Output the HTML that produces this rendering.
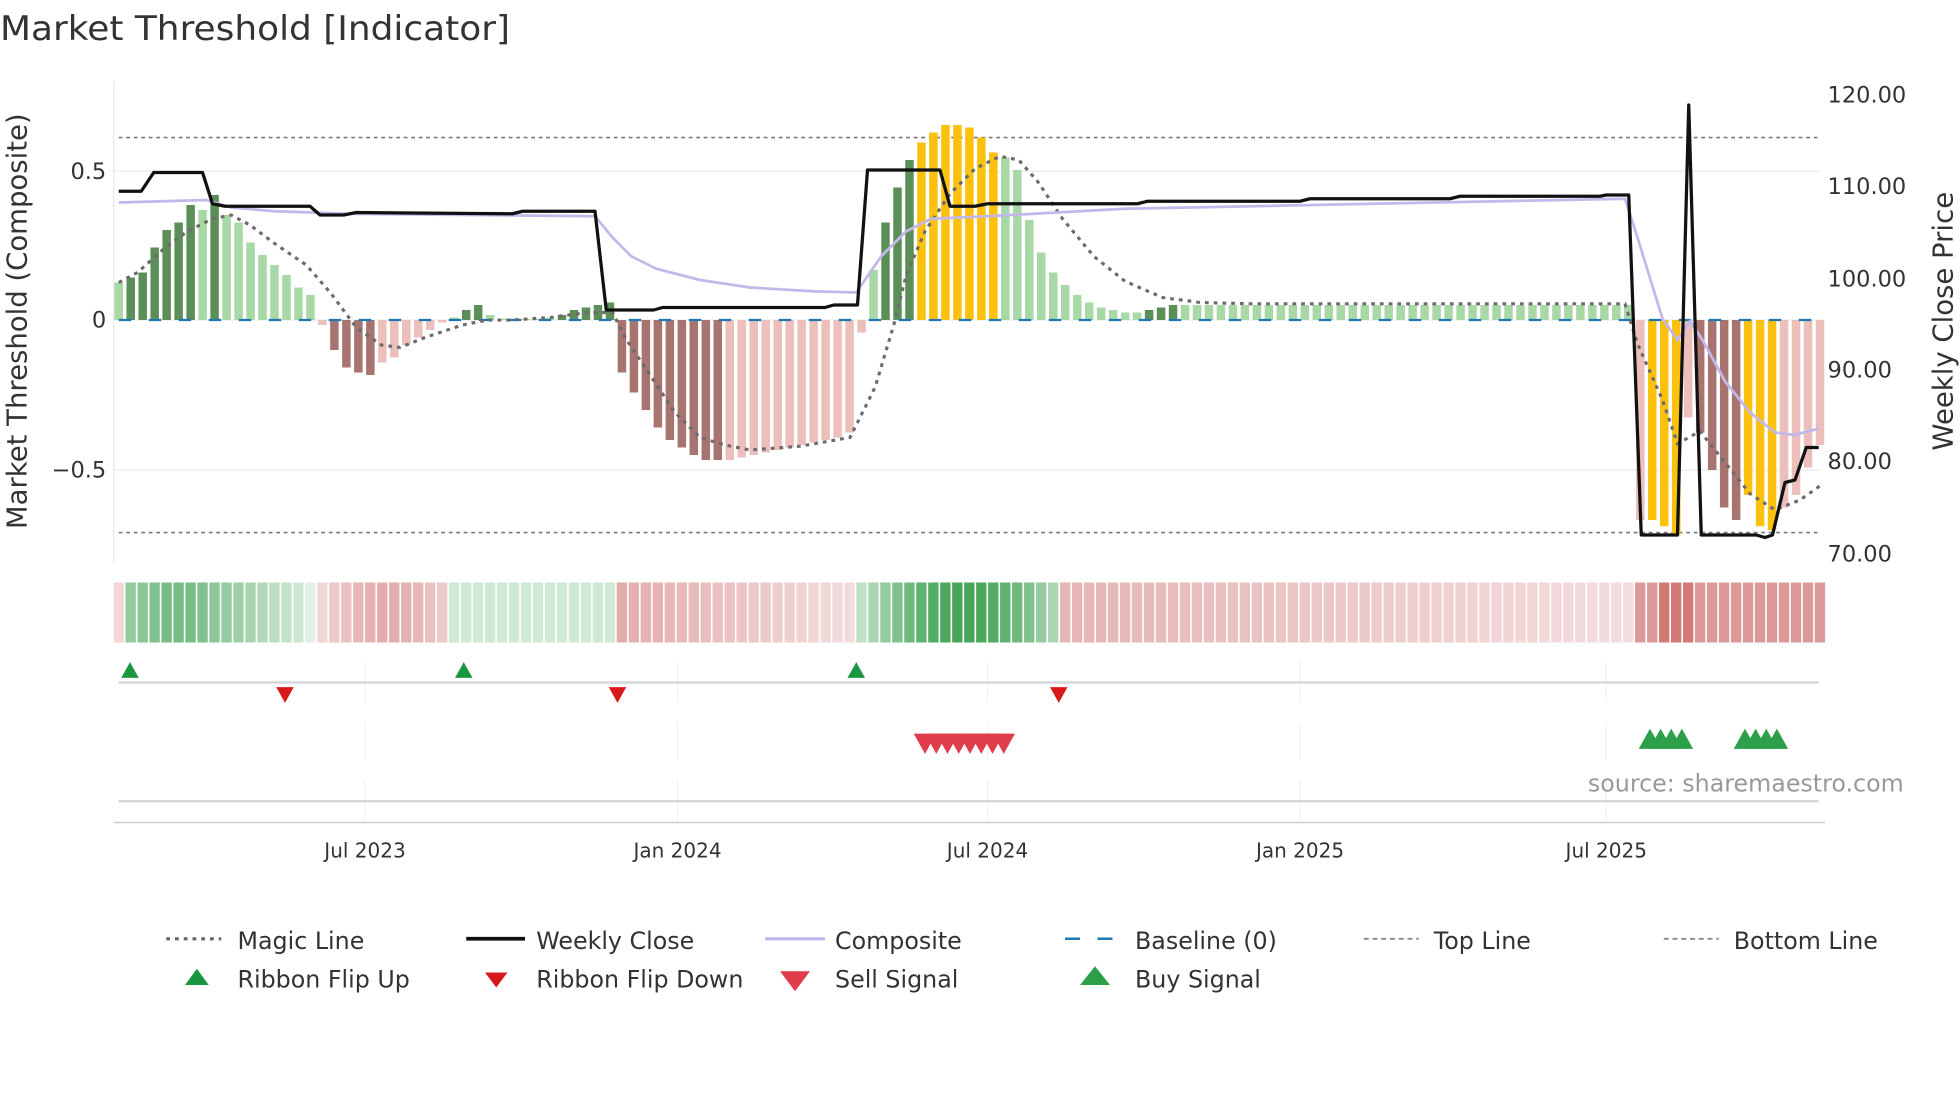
<!DOCTYPE html>
<html><head><meta charset="utf-8"><style>
html,body{margin:0;padding:0;background:#fff;}
svg{display:block;font-family:"DejaVu Sans","Liberation Sans",sans-serif;}
</style></head><body>
<svg id="s" width="1960" height="1102" viewBox="0 0 1568 881.6" xmlns="http://www.w3.org/2000/svg">
<rect width="1568" height="881.6" fill="#fff"/>
<text x="0" y="32" font-size="27" fill="#333" textLength="408" lengthAdjust="spacingAndGlyphs">Market Threshold [Indicator]</text>
<g id="grid"></g>
<g id="bars"></g>
<g id="ribbon"></g>
<g id="lines"></g>
<g font-size="18" fill="#333">
<text x="85" y="143" text-anchor="end">0.5</text>
<text x="85" y="262" text-anchor="end">0</text>
<text x="85" y="382" text-anchor="end">−0.5</text>
<text x="1462" y="82">120.00</text>
<text x="1462" y="155">110.00</text>
<text x="1462" y="229">100.00</text>
<text x="1462" y="302">90.00</text>
<text x="1462" y="375">80.00</text>
<text x="1462" y="449">70.00</text>
</g>
<text transform="translate(21,257) rotate(-90)" font-size="22" fill="#333" text-anchor="middle">Market Threshold (Composite)</text>
<text transform="translate(1562,257) rotate(-90)" font-size="22" fill="#333" text-anchor="middle">Weekly Close Price</text>
<g font-size="16" fill="#333" text-anchor="middle">
<text x="292" y="686">Jul 2023</text>
<text x="542" y="686">Jan 2024</text>
<text x="790" y="686">Jul 2024</text>
<text x="1040" y="686">Jan 2025</text>
<text x="1285" y="686">Jul 2025</text>
</g>
<text x="1523" y="633" font-size="19" fill="#999" text-anchor="end">source: sharemaestro.com</text>
<g font-size="19" fill="#333">
<line x1="133" y1="751" x2="177" y2="751" stroke="#666" stroke-width="2.5" stroke-dasharray="3,4"/>
<text x="190" y="759">Magic Line</text>
<line x1="373" y1="751" x2="420" y2="751" stroke="#111" stroke-width="3"/>
<text x="429" y="759">Weekly Close</text>
<line x1="612" y1="751" x2="660" y2="751" stroke="#c0b5ea" stroke-width="2.5"/>
<text x="668" y="759">Composite</text>
<line x1="852" y1="751" x2="896" y2="751" stroke="#1f77b4" stroke-width="2" stroke-dasharray="12,14"/>
<text x="908" y="759">Baseline (0)</text>
<line x1="1091" y1="751" x2="1135" y2="751" stroke="#888" stroke-width="1.5" stroke-dasharray="4,3"/>
<text x="1147" y="759">Top Line</text>
<line x1="1331" y1="751" x2="1375" y2="751" stroke="#888" stroke-width="1.5" stroke-dasharray="4,3"/>
<text x="1387" y="759">Bottom Line</text>
<polygon points="148,788 167,788 157.5,775" fill="#1a9641"/>
<text x="190" y="790">Ribbon Flip Up</text>
<polygon points="388,778 406,778 397,790" fill="#d7191c"/>
<text x="429" y="790">Ribbon Flip Down</text>
<polygon points="624,777 648,777 636,793" fill="#e03c4b"/>
<text x="668" y="790">Sell Signal</text>
<polygon points="864,788 888,788 876,773" fill="#2ca048"/>
<text x="908" y="790">Buy Signal</text>
</g>
</svg>
<script>
(function(){
var NS="http://www.w3.org/2000/svg";
function el(p,t,a){var e=document.createElementNS(NS,t);for(var k in a)e.setAttribute(k,a[k]);p.appendChild(e);return e;}
var grid=document.getElementById('grid'),bars=document.getElementById('bars'),rib=document.getElementById('ribbon'),lines=document.getElementById('lines');
[137,376,256].forEach(function(y){el(grid,'line',{x1:91,x2:1457,y1:y,y2:y,stroke:'#eceff1','stroke-width':1.2});});
el(grid,'line',{x1:91,x2:91,y1:65,y2:450,stroke:'#e6e6e6','stroke-width':1});
[292,542,790,1040,1285].forEach(function(x){
 el(grid,'line',{x1:x,x2:x,y1:530,y2:562,stroke:'#eef0f2','stroke-width':1});
 el(grid,'line',{x1:x,x2:x,y1:578,y2:608,stroke:'#eef0f2','stroke-width':1});
 el(grid,'line',{x1:x,x2:x,y1:624,y2:656,stroke:'#eef0f2','stroke-width':1});
});
el(grid,'line',{x1:95,x2:1455,y1:546,y2:546,stroke:'#d5d8db','stroke-width':2});
el(grid,'line',{x1:95,x2:1455,y1:641,y2:641,stroke:'#d5d8db','stroke-width':2});
el(grid,'line',{x1:91,x2:1460,y1:658,y2:658,stroke:'#ccc','stroke-width':1.2});
el(grid,'line',{x1:95,x2:1457,y1:110,y2:110,stroke:'#777','stroke-width':1.3,'stroke-dasharray':'3,3'});
el(grid,'line',{x1:95,x2:1457,y1:426,y2:426,stroke:'#777','stroke-width':1.3,'stroke-dasharray':'3,3'});
var C={L:'#a8d8a5',D:'#5c8f58',B:'#a87470',P:'#ecbfbb',G:'#fbc10c'};
var data=[[30,'L'],[34,'D'],[38,'D'],[58,'D'],[72,'D'],[78,'D'],[92,'D'],[88,'L'],[100,'D'],[84,'L'],[78,'L'],[62,'L'],[52,'L'],[44,'L'],[36,'L'],[26,'L'],[20,'L'],
[-4,'P'],[-24,'B'],[-38,'B'],[-42,'B'],[-44,'B'],[-34,'P'],[-30,'P'],[-20,'P'],[-14,'P'],[-8,'P'],[-2,'P'],
[2,'L'],[8,'D'],[12,'D'],[4,'L'],[1,'L'],[1,'L'],[1,'L'],[1,'L'],[2,'L'],[4,'D'],[8,'D'],[10,'D'],[12,'D'],[14,'D'],
[-42,'B'],[-58,'B'],[-72,'B'],[-86,'B'],[-96,'B'],[-102,'B'],[-108,'B'],[-112,'B'],[-112,'B'],[-112,'P'],[-110,'P'],[-108,'P'],[-106,'P'],[-104,'P'],[-102,'P'],[-100,'P'],[-98,'P'],[-96,'P'],[-94,'P'],[-90,'P'],[-10,'P'],
[40,'L'],[78,'D'],[106,'D'],[128,'D'],[142,'G'],[150,'G'],[156,'G'],[156,'G'],[154,'G'],[146,'G'],[134,'G'],[130,'L'],[120,'L'],[80,'L'],[54,'L'],[38,'L'],[28,'L'],[20,'L'],[14,'L'],[10,'L'],[8,'L'],[6,'L'],[6,'L'],[8,'D'],[10,'D'],[12,'D']];
while(data.length<127)data.push([12,'L']);
data=data.concat([[-160,'P'],[-160,'G'],[-165,'G'],[-172,'G'],[-78,'P'],[-90,'B'],[-120,'B'],[-150,'B'],[-160,'B'],[-140,'G'],[-165,'G'],[-168,'G'],[-150,'P'],[-140,'P'],[-118,'P'],[-100,'P']]);
var n=data.length, x0=95, x1=1456, dx=(x1-x0)/(n-1);
data.forEach(function(d,i){var x=x0+i*dx-3.4,h=d[0];
 el(bars,'rect',{x:x,y:h>0?256-h:256,width:6.8,height:Math.abs(h),fill:C[d[1]]});
 var col;
 if(i<17){var g=[.35,.55,.6,.65,.7,.7,.7,.65,.6,.55,.5,.45,.4,.35,.3,.25,.15][i];col='rgba(60,160,80,'+g+')';if(i==0)col='#f3d7d7';}
 else if(i<28){col='rgba(200,90,90,'+(0.25+0.25*Math.sin((i-17)/11*Math.PI))+')';}
 else if(i<42){col='rgba(60,170,90,0.25)';}
 else if(i<62){col='rgba(200,90,90,'+(0.5-0.3*(i-42)/20)+')';}
 else if(i<79){var t=Math.sin((i-62)/17*Math.PI);col='rgba(50,155,70,'+(0.3+0.6*t)+')';}
 else if(i<127){col='rgba(200,90,90,'+(0.45-0.25*(i-79)/48)+')';}
 else {col=(i>=129&&i<=131)?'#d27b76':'rgba(195,85,85,0.6)';}
 el(rib,'rect',{x:x0+i*dx-dx/2+0.6,y:466,width:dx-1.3,height:48,fill:col});
});
el(lines,'line',{x1:95,x2:1457,y1:256,y2:256,stroke:'#1f77b4','stroke-width':1.8,'stroke-dasharray':'10,14'});
function pl(pts,a){a.points=pts.map(function(p){return p.join(',')}).join(' ');a.fill='none';el(lines,'polyline',a);}
pl([[95,226],[110,218],[130,200],[150,185],[170,175],[185,172],[200,180],[220,195],[245,212],[265,235],[285,262],[305,276],[320,278],[340,270],[370,260],[390,256],[410,256],[440,254],[470,250],[490,250],[500,270],[520,300],[540,330],[560,350],[580,356],[600,360],[640,357],[680,350],[700,310],[715,260],[725,220],[740,185],[760,155],[780,135],[800,125],[815,128],[830,145],[850,175],[875,205],[900,225],[930,238],[960,242],[1000,243],[1300,243],[1310,275],[1330,320],[1342,355],[1360,345],[1380,370],[1400,395],[1420,408],[1440,400],[1457,388]],{stroke:'#6b6b6b','stroke-width':2.5,'stroke-dasharray':'3,4'});
pl([[95,162],[130,161],[165,160],[185,166],[220,169],[280,171],[476,173],[490,190],[505,205],[525,215],[560,224],[600,230],[650,233],[685,234],[705,205],[725,185],[745,175],[790,173],[900,167],[1300,159],[1310,190],[1330,255],[1342,272],[1352,257],[1362,272],[1380,305],[1400,330],[1420,346],[1435,348],[1455,343]],{stroke:'#c2b8ec','stroke-width':2.2});
pl([[95,153],[113,153],[123,138],[162,138],[170,163],[180,165],[248,165],[256,172],[275,172],[285,170],[410,171],[418,169],[476,169],[485,248],[523,248],[530,246],[660,246],[667,244],[686,244],[694,136],[752,136],[760,165],[780,165],[790,163],[910,163],[918,161],[1040,161],[1048,159],[1160,159],[1168,157],[1280,157],[1285,156],[1303,156],[1313,428],[1342,428],[1351,84],[1361,428],[1405,428],[1412,430],[1418,428],[1428,386],[1436,384],[1445,358],[1455,358]],{stroke:'#111','stroke-width':2.6,'stroke-linejoin':'round'});
function up(x,y,s,c){el(lines,'polygon',{points:(x-s)+','+(y+s*0.9)+' '+(x+s)+','+(y+s*0.9)+' '+x+','+(y-s*0.9),fill:c});}
function dn(x,y,s,c){el(lines,'polygon',{points:(x-s)+','+(y-s*0.9)+' '+(x+s)+','+(y-s*0.9)+' '+x+','+(y+s*0.9),fill:c});}
[104,371,685].forEach(function(x){up(x,536,7,'#1a9641');});
[228,494,847].forEach(function(x){dn(x,556,7,'#d7191c');});
for(var i=0;i<8;i++)dn(740+i*9,595,9,'#e03c4b');
for(var i=0;i<4;i++)up(1320+i*8.5,591,9,'#2ca048');
for(var i=0;i<4;i++)up(1396+i*8.5,591,9,'#2ca048');
})();
</script>
</body></html>
